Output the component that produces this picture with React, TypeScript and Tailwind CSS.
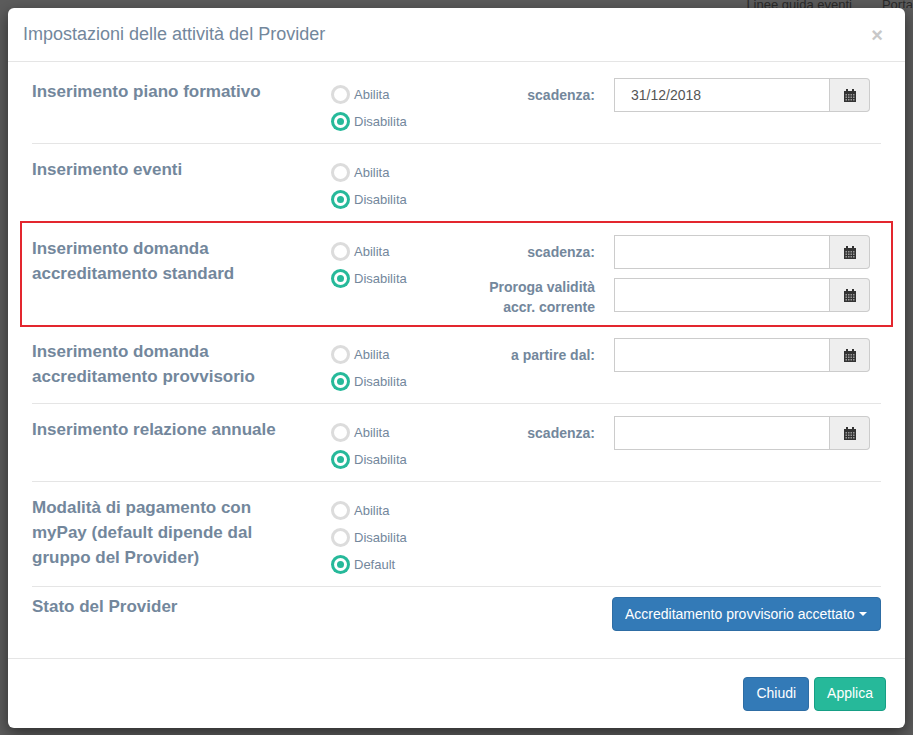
import React from "react";

const font = { fontFamily: '"Liberation Sans Narrow", "Liberation Sans", Arial, sans-serif' };

const Radio = ({ label, on }: { label: string; on?: boolean }) => (
  <div className="flex items-center gap-[4px] h-[27px] text-[13px] text-[#73879c]">
    {on ? (
      <span className="w-[19px] h-[19px] rounded-full bg-[#26b99a] flex items-center justify-center">
        <span className="w-[13px] h-[13px] rounded-full bg-white flex items-center justify-center">
          <span className="w-[7px] h-[7px] rounded-full bg-[#26b99a]" />
        </span>
      </span>
    ) : (
      <span className="w-[19px] h-[19px] rounded-full border-[3px] border-[#dcdcdc] bg-white" />
    )}
    <span>{label}</span>
  </div>
);

const Cal = () => (
  <svg width="12" height="13" viewBox="0 0 12 13">
    <rect x="0" y="2" width="12" height="11" fill="#333" />
    <rect x="2" y="0" width="2" height="3" fill="#333" />
    <rect x="8" y="0" width="2" height="3" fill="#333" />
    {[5, 7.5, 10].map((y) =>
      [1.5, 4, 6.5, 9].map((x) => <rect key={`${x}-${y}`} x={x} y={y} width="1.5" height="1.5" fill="#999" />)
    )}
  </svg>
);

const DateInput = ({ value }: { value?: string }) => (
  <div className="flex w-[256px] h-[34px] shrink-0">
    <div className="flex-1 border border-[#ccc] px-[16px] flex items-center text-[14px] text-[#555]">{value}</div>
    <div className="w-[40px] border border-l-0 border-[#ccc] bg-[#eee] rounded-r-[4px] flex items-center justify-center">
      <Cal />
    </div>
  </div>
);

const Row = ({
  title,
  radios,
  fields,
  hl,
}: {
  title: React.ReactNode;
  radios: [string, boolean][];
  fields?: [React.ReactNode, string?][];
  hl?: boolean;
}) => (
  <div
    className={`flex pt-[12px] pb-[8px] ${
      hl ? "border-2 border-[#e3262e] mx-[-12px] px-[10px] -my-[1px] relative" : "border-b border-[#e5e5e5]"
    }`}
  >
    <div className="w-[299px] shrink-0 text-[17px] font-bold text-[#73879c] leading-[25px] pt-[1px]">{title}</div>
    <div className="w-[149px] shrink-0 pt-[3px]">
      {radios.map(([l, o]) => (
        <Radio key={l} label={l} on={o} />
      ))}
    </div>
    <div className="flex flex-col gap-[9px]">
      {fields?.map(([lab, v], i) => (
        <div key={i} className="flex">
          <div className="w-[134px] shrink-0 text-right text-[14px] font-bold text-[#73879c] leading-[24px] pr-[19px] pt-[5px]">
            {lab}
          </div>
          <DateInput value={v} />
        </div>
      ))}
    </div>
  </div>
);

export default function App() {
  return (
    <div className="w-[913px] h-[735px] bg-[#5c5c5c] relative overflow-hidden" style={font}>
      <div className="absolute right-[0px] top-[0px] text-[13px] text-[#2a2a2a] flex gap-[30px] leading-[10px] h-[8px] overflow-hidden">
        <span>Linee guida eventi</span>
        <span>Porta</span>
      </div>
      <div className="absolute left-[8px] top-[8px] w-[897px] h-[720px] bg-white rounded-[6px] shadow-[0_5px_15px_rgba(0,0,0,0.5)] flex flex-col">
        <div className="h-[54px] border-b border-[#e5e5e5] flex items-center justify-between px-[15px]">
          <span className="text-[18px] text-[#73879c]">Impostazioni delle attività del Provider</span>
          <span className="text-[20px] font-bold text-[#c8c8c8] pr-[7px]">×</span>
        </div>
        <div className="px-[24px] pt-[4px] flex-1">
          <Row title="Inserimento piano formativo" radios={[["Abilita", false], ["Disabilita", true]]} fields={[["scadenza:", "31/12/2018"]]} />
          <Row title="Inserimento eventi" radios={[["Abilita", false], ["Disabilita", true]]} />
          <Row
            hl
            title={<>Inserimento domanda<br />accreditamento standard</>}
            radios={[["Abilita", false], ["Disabilita", true]]}
            fields={[["scadenza:"], [<span key="p" className="block leading-[20px] -mt-[6px]">Proroga validità<br />accr. corrente</span>]]}
          />
          <Row
            title={<>Inserimento domanda<br />accreditamento provvisorio</>}
            radios={[["Abilita", false], ["Disabilita", true]]}
            fields={[["a partire dal:"]]}
          />
          <Row title="Inserimento relazione annuale" radios={[["Abilita", false], ["Disabilita", true]]} fields={[["scadenza:"]]} />
          <Row
            title={<>Modalità di pagamento con<br />myPay (default dipende dal<br />gruppo del Provider)</>}
            radios={[["Abilita", false], ["Disabilita", false], ["Default", true]]}
          />
          <div className="flex items-center justify-between pt-[10px]">
            <span className="text-[17px] font-bold text-[#73879c] -mt-[14px]">Stato del Provider</span>
            <div className="w-[269px] h-[34px] bg-[#337ab7] border border-[#2e6da4] rounded-[4px] text-white text-[14px] flex items-center pl-[12px] whitespace-nowrap">
              <span className="w-[230px] overflow-hidden">Accreditamento provvisorio accettato</span>
              <span className="ml-[4px] border-x-[4px] border-x-transparent border-t-[4px] border-t-white" />
            </div>
          </div>
        </div>
        <div className="h-[70px] border-t border-[#e5e5e5] flex items-center justify-end gap-[5px] px-[19px]">
          <button className="h-[34px] px-[12px] bg-[#337ab7] border border-[#2e6da4] rounded-[4px] text-white text-[14px]">Chiudi</button>
          <button className="h-[34px] px-[12px] bg-[#26b99a] border border-[#169f85] rounded-[4px] text-white text-[14px]">Applica</button>
        </div>
      </div>
    </div>
  );
}
